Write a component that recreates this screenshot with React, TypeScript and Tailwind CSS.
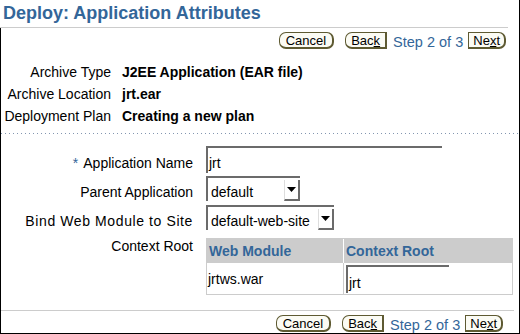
import React from "react";

const F = "font-['Liberation_Sans',Arial,sans-serif]";

function Btn({ children, shape }: { children: React.ReactNode; shape: "both" | "left" | "right" }) {
  const r =
    shape === "both"
      ? "rounded-[7px] px-[6px]"
      : shape === "left"
      ? "rounded-l-[7px] px-[5px]"
      : "rounded-r-[7px] px-[4px]";
  return (
    <div
      className={`h-[17px] flex items-center bg-[#fbfbf4] border border-[#5e5a32] border-r-2 border-b-2 ${r} text-[13px] leading-none text-black`}
    >
      {children}
    </div>
  );
}

function ButtonRow() {
  return (
    <div className="flex items-center justify-end h-[17px]">
      <Btn shape="both">Cancel</Btn>
      <div className="w-[11px]" />
      <Btn shape="left">
        Bac<span className="underline">k</span>
      </Btn>
      <span className="ml-[6px] mr-[5px] text-[14.5px] leading-[16px] text-[#336699] pt-[3px]">Step 2 of 3</span>
      <Btn shape="right">
        Ne<span className="underline">x</span>t
      </Btn>
    </div>
  );
}

function Select({ value, width }: { value: string; width: number }) {
  return (
    <div
      className="h-[25px] flex items-stretch border-t-2 border-l-2 border-[#6b6b6b] bg-white"
      style={{ width }}
    >
      <div className="flex-1 flex items-center pl-[3px] pt-[4px] text-[14px] text-black">{value}</div>
      <div className="w-[16px] mt-[2px] flex items-center justify-center border-l border-[#dddddd] border-r-2 border-b-2 border-r-[#6b6b6b] border-b-[#6b6b6b] bg-white">
        <svg width="9" height="5" viewBox="0 0 9 5">
          <polygon points="0,0 9,0 4.5,5" fill="#000" />
        </svg>
      </div>
    </div>
  );
}

function Row({ label, children, labelClass = "" }: { label: React.ReactNode; children: React.ReactNode; labelClass?: string }) {
  return (
    <div className="flex items-center gap-x-[13px]">
      <div className={`w-[192px] shrink-0 text-right pt-[6px] ${labelClass}`}>{label}</div>
      {children}
    </div>
  );
}

export default function App() {
  return (
    <div className={`w-[520px] h-[334px] bg-white border-r border-b border-black flex flex-col overflow-hidden ${F}`}>
      <div className="h-[27px] shrink-0 pl-[3px] pt-[2px] text-[18px] font-bold text-[#336699] leading-[22px]">
        Deploy: Application Attributes
      </div>
      <div className="h-px shrink-0 bg-[#cccccc] w-[508px]" />
      <div className="flex-1 border-l border-black flex flex-col">
        <div className="h-[24px] shrink-0 pt-[4px] pr-[13px]">
          <ButtonRow />
        </div>
        <div className="mt-[9px] grid grid-cols-[110px_1fr] auto-rows-[22px] items-center gap-x-[11px] text-[14px] text-black leading-[16px]">
          <div className="text-right">Archive Type</div>
          <div className="font-bold">J2EE Application (EAR file)</div>
          <div className="text-right">Archive Location</div>
          <div className="font-bold">jrt.ear</div>
          <div className="text-right">Deployment Plan</div>
          <div className="font-bold">Creating a new plan</div>
        </div>
        <div className="mt-[6px] h-px shrink-0 bg-[repeating-linear-gradient(90deg,#8396b0_0_1px,transparent_1px_4px)]" />
        <div className="mt-[12px] flex flex-col text-[14px] text-black leading-[16px]">
          <Row
            label={
              <>
                <span className="text-[#336699] mr-[5px]">*</span>Application Name
              </>
            }
          >
            <div className="h-[27px] w-[236px] border-t-2 border-l-2 border-[#6b6b6b] flex items-center pl-[1px] pt-[5px]">jrt</div>
          </Row>
          <div className="h-[3px]" />
          <Row label="Parent Application">
            <Select value="default" width={94} />
          </Row>
          <div className="h-[4px]" />
          <Row label="Bind Web Module to Site" labelClass="tracking-[0.6px]">
            <Select value="default-web-site" width={128} />
          </Row>
          <div className="h-[8px]" />
          <div className="flex items-start gap-x-[13px]">
            <div className="w-[192px] shrink-0 text-right">Context Root</div>
            <div className="w-[307px] border border-[#cccccc] grid grid-cols-[137px_1fr]">
              <div className="h-[24px] bg-[#cccccc] flex items-center pl-[2px] font-bold text-[#336699] border-r border-white">
                Web Module
              </div>
              <div className="h-[24px] bg-[#cccccc] flex items-center pl-[2px] font-bold text-[#336699]">
                Context Root
              </div>
              <div className="h-[31px] pl-[1px] pt-[8px] border-r border-[#cccccc]">jrtws.war</div>
              <div className="h-[31px] pl-[2px] pt-[2px]">
                <div className="h-[28px] w-[103px] border-t-2 border-l-2 border-[#6b6b6b] flex items-center pl-[1px] pt-[6px]">jrt</div>
              </div>
            </div>
          </div>
        </div>
        <div className="mt-[15px] h-px shrink-0 bg-[#cccccc] w-[513px]" />
        <div className="pt-[4px] pr-[16px]">
          <ButtonRow />
        </div>
      </div>
    </div>
  );
}
